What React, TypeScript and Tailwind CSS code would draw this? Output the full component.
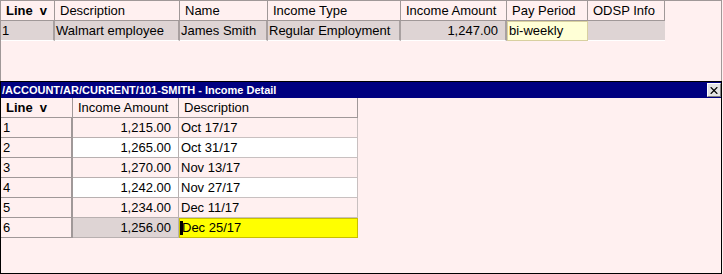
import { X } from 'lucide-react'

const topCols = [
  { label: 'Line', w: 'w-[54px]', bold: true },
  { label: 'Description', w: 'w-[125px]' },
  { label: 'Name', w: 'w-[88px]' },
  { label: 'Income Type', w: 'w-[133px]' },
  { label: 'Income Amount', w: 'w-[106px]' },
  { label: 'Pay Period', w: 'w-[81px]' },
  { label: 'ODSP Info', w: 'w-[77px]' },
]

const details = [
  { line: '1', amount: '1,215.00', desc: 'Oct 17/17' },
  { line: '2', amount: '1,265.00', desc: 'Oct 31/17' },
  { line: '3', amount: '1,270.00', desc: 'Nov 13/17' },
  { line: '4', amount: '1,242.00', desc: 'Nov 27/17' },
  { line: '5', amount: '1,234.00', desc: 'Dec 11/17' },
  { line: '6', amount: '1,256.00', desc: 'Dec 25/17' },
]

function HeaderCell({ w, label, bold }: { w: string; label: string; bold?: boolean }) {
  return (
    <div
      className={`${w} h-full shrink-0 flex items-center pl-[5px] pt-px border-r border-b border-[#a09898] ${bold ? 'font-bold' : ''}`}
    >
      {bold ? (
        <>
          <span>{label}</span>
          <span className="ml-[7px]">v</span>
        </>
      ) : (
        label
      )}
    </div>
  )
}

export default function App() {
  return (
    <div
      className="w-[723px] h-[274px] bg-[#fff0f0] text-[13px] text-black flex flex-col overflow-hidden"
      style={{ fontFamily: '"Liberation Sans", Arial, sans-serif' }}
    >
      {/* top list */}
      <div className="h-[81px] w-[722px] border-x border-t border-[#a09898] flex flex-col">
        <div className="h-[20px] flex">
          {topCols.map((c) => (
            <HeaderCell key={c.label} w={c.w} label={c.label} bold={c.bold} />
          ))}
        </div>
        <div className="h-[20px] flex">
          <div className="w-[54px] shrink-0 bg-[#ded4d4] border-r-2 border-r-[#a8a0a0] border-b border-b-white pl-[1px] flex items-center">1</div>
          <div className="w-[125px] shrink-0 bg-[#ded4d4] border-r-2 border-r-[#a8a0a0] border-b border-b-white pl-[1px] flex items-center">Walmart employee</div>
          <div className="w-[88px] shrink-0 bg-[#ded4d4] border-r-2 border-r-[#a8a0a0] border-b border-b-white pl-[1px] flex items-center">James Smith</div>
          <div className="w-[133px] shrink-0 bg-[#ded4d4] border-r-2 border-r-[#a8a0a0] border-b border-b-white pl-[1px] flex items-center whitespace-nowrap overflow-hidden">Regular Employment</div>
          <div className="w-[106px] shrink-0 bg-[#ded4d4] border-r-2 border-r-[#a8a0a0] border-b border-b-white pr-[7px] flex items-center justify-end">1,247.00</div>
          <div className="w-[81px] shrink-0 bg-[#ffffd6] border border-[#d8d0a0] pl-[1px] flex items-center">bi-weekly</div>
          <div className="w-[77px] shrink-0 bg-[#ded4d4] border-b border-b-white"></div>
        </div>
      </div>

      {/* detail window */}
      <div className="h-[193px] w-[722px] border border-black flex flex-col">
        <div className="h-[16px] bg-[#000080] flex items-center justify-between">
          <span className="text-white font-bold text-[11px] pl-[1px] leading-none">
            /ACCOUNT/AR/CURRENT/101-SMITH - Income Detail
          </span>
          <div className="w-[14px] h-[14px] bg-[#e4e4e4] border-t border-l border-white border-r border-b border-r-[#808080] border-b-[#808080] flex items-center justify-center">
            <X size={13} strokeWidth={2.2} className="text-black" />
          </div>
        </div>

        <div className="h-[20px] flex">
          <HeaderCell w="w-[72px]" label="Line" bold />
          <HeaderCell w="w-[106px]" label="Income Amount" />
          <HeaderCell w="w-[179px]" label="Description" />
        </div>

        {details.map((d, i) => {
          const last = i === details.length - 1
          const rowBg = i % 2 === 0 ? 'bg-[#fff0f0]' : 'bg-white'
          return (
            <div key={d.line} className="h-[20px] flex">
              <div className="w-[72px] shrink-0 border-r-2 border-b border-[#a09898] pl-[2px] flex items-center">
                {d.line}
              </div>
              <div
                className={`w-[106px] shrink-0 border-r border-b border-[#b8b0b0] pr-[7px] flex items-center justify-end ${last ? 'bg-[#ded4d4]' : rowBg}`}
              >
                {d.amount}
              </div>
              {last ? (
                <div className="w-[179px] shrink-0 bg-[#ffff00] border border-[#c8c000] flex items-center">
                  <span className="w-[3px] h-[14px] bg-black mr-[-1px]"></span>
                  <span>{d.desc}</span>
                </div>
              ) : (
                <div className={`w-[179px] shrink-0 border-r border-b border-[#c8c0c0] pl-[2px] flex items-center ${rowBg}`}>
                  {d.desc}
                </div>
              )}
            </div>
          )
        })}
      </div>
    </div>
  )
}
